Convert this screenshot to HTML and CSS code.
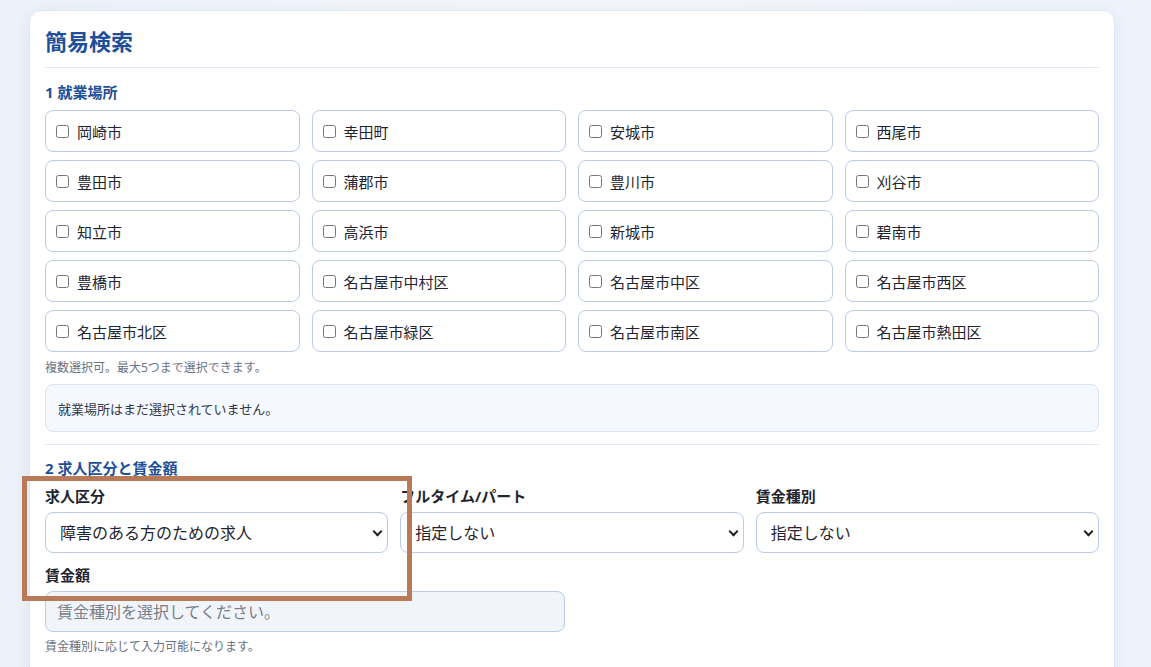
FILE: index.html
```html
<!DOCTYPE html>
<html lang="ja">
<head>
<meta charset="utf-8">
<title>簡易検索</title>
<link rel="stylesheet" href="styles.css">
</head>
<body>
<main class="page">
  <section class="card">
    <h2 class="card-title">簡易検索</h2>

    <div class="group">
      <h3 class="group-title">1 就業場所</h3>
      <div class="place-grid">
        <label class="place"><input type="checkbox"><span>岡崎市</span></label>
        <label class="place"><input type="checkbox"><span>幸田町</span></label>
        <label class="place"><input type="checkbox"><span>安城市</span></label>
        <label class="place"><input type="checkbox"><span>西尾市</span></label>
        <label class="place"><input type="checkbox"><span>豊田市</span></label>
        <label class="place"><input type="checkbox"><span>蒲郡市</span></label>
        <label class="place"><input type="checkbox"><span>豊川市</span></label>
        <label class="place"><input type="checkbox"><span>刈谷市</span></label>
        <label class="place"><input type="checkbox"><span>知立市</span></label>
        <label class="place"><input type="checkbox"><span>高浜市</span></label>
        <label class="place"><input type="checkbox"><span>新城市</span></label>
        <label class="place"><input type="checkbox"><span>碧南市</span></label>
        <label class="place"><input type="checkbox"><span>豊橋市</span></label>
        <label class="place"><input type="checkbox"><span>名古屋市中村区</span></label>
        <label class="place"><input type="checkbox"><span>名古屋市中区</span></label>
        <label class="place"><input type="checkbox"><span>名古屋市西区</span></label>
        <label class="place"><input type="checkbox"><span>名古屋市北区</span></label>
        <label class="place"><input type="checkbox"><span>名古屋市緑区</span></label>
        <label class="place"><input type="checkbox"><span>名古屋市南区</span></label>
        <label class="place"><input type="checkbox"><span>名古屋市熱田区</span></label>
      </div>
      <p class="hint">複数選択可。最大5つまで選択できます。</p>
      <div class="notice">就業場所はまだ選択されていません。</div>
    </div>

    <div class="group">
      <h3 class="group-title">2 求人区分と賃金額</h3>
      <div class="field-grid">
        <div class="field">
          <label class="field-label">求人区分</label>
          <div class="select-wrap">
            <select class="select"><option>障害のある方のための求人</option></select>
          </div>
        </div>
        <div class="field">
          <label class="field-label">フルタイム/パート</label>
          <div class="select-wrap">
            <select class="select"><option>指定しない</option></select>
          </div>
        </div>
        <div class="field">
          <label class="field-label">賃金種別</label>
          <div class="select-wrap">
            <select class="select"><option>指定しない</option></select>
          </div>
        </div>
      </div>
      <div class="field wage">
        <label class="field-label">賃金額</label>
        <input class="text-input" type="text" placeholder="賃金種別を選択してください。" disabled>
        <p class="hint hint-tight">賃金種別に応じて入力可能になります。</p>
      </div>
      <div class="notice notice-next">&nbsp;</div>
    </div>
  </section>
</main>
<div class="focus-frame"></div>
</body>
</html>
```

FILE: styles.css
```css
* {
  box-sizing: border-box;
}

html, body {
  margin: 0;
  height: 100%;
  overflow: hidden;
}

body {
  font-family: "Noto Sans", "Noto Sans CJK JP", sans-serif;
  color: #1f2530;
  background: linear-gradient(90deg, #edf1f9 0%, #f4f6fb 50%, #eef2fa 100%);
}

.page {
  padding: 10px 36px 0 29px;
}

.card {
  background: #ffffff;
  border: 1px solid #dde5f4;
  border-radius: 12px;
  box-shadow: 0 4px 18px rgba(40, 70, 140, 0.07);
  padding: 14px 15px 30px;
}

.card-title {
  margin: 0;
  font-size: 22px;
  line-height: 32px;
  font-weight: 700;
  color: #1e4f98;
  padding-bottom: 10px;
  border-bottom: 1px solid #e2e9f5;
}

.group {
  padding-top: 14px;
}

.group + .group {
  margin-top: 12px;
  padding-top: 13px;
  border-top: 1px solid #e2e9f5;
}

.group-title {
  margin: 0 0 8px;
  font-size: 15px;
  line-height: 20px;
  font-weight: 700;
  color: #1e4f98;
}

.place-grid {
  display: grid;
  grid-template-columns: repeat(4, 1fr);
  gap: 8px 12px;
}

.place {
  display: flex;
  align-items: center;
  gap: 8px;
  height: 42px;
  padding: 0 10px;
  border: 1px solid #bccbe8;
  border-radius: 8px;
  font-size: 15px;
  color: #1f2530;
  background: #fff;
}

.place input {
  width: 13px;
  height: 13px;
  margin: 0;
  flex: none;
}

.hint {
  margin: 7px 0 0;
  font-size: 12px;
  line-height: 17px;
  color: #6b7280;
}

.hint-tight {
  margin-top: 1px;
}

.notice {
  margin-top: 8px;
  height: 48px;
  display: flex;
  align-items: center;
  padding: 0 12px;
  background: #f5f8fe;
  border: 1px solid #d9e4f6;
  border-radius: 8px;
  font-size: 13px;
  color: #333a46;
}

.field-grid {
  display: grid;
  grid-template-columns: repeat(3, 1fr);
  gap: 12px;
  margin-top: 8px;
}

.field {
  display: flex;
  flex-direction: column;
  gap: 5px;
}

.field-label {
  font-size: 15px;
  line-height: 21px;
  font-weight: 700;
  color: #1f2530;
}

.select-wrap {
  position: relative;
}

.select-wrap::after {
  content: "";
  position: absolute;
  right: 7px;
  top: 50%;
  width: 5px;
  height: 5px;
  margin-top: -5px;
  border-right: 2px solid #222;
  border-bottom: 2px solid #222;
  transform: rotate(45deg);
  pointer-events: none;
}

.select {
  appearance: none;
  -webkit-appearance: none;
  width: 100%;
  height: 41px;
  padding: 0 28px 0 14px;
  border: 1px solid #bccbe8;
  border-radius: 8px;
  background: #fff;
  font-family: inherit;
  font-size: 16px;
  color: #1f2530;
}

.wage {
  margin-top: 12px;
}

.text-input {
  width: 520px;
  height: 41px;
  padding: 0 11px;
  border: 1px solid #bccbe8;
  border-radius: 8px;
  background: #f1f4f9;
  font-family: inherit;
  font-size: 16px;
}

.text-input::placeholder {
  color: #7a808a;
}

.notice-next {
  margin-top: 14px;
}

/* highlight frame drawn over the job-category field */
.focus-frame {
  position: absolute;
  left: 22px;
  top: 476px;
  width: 390px;
  height: 125px;
  border: 5px solid #b97b57;
  pointer-events: none;
}
```
